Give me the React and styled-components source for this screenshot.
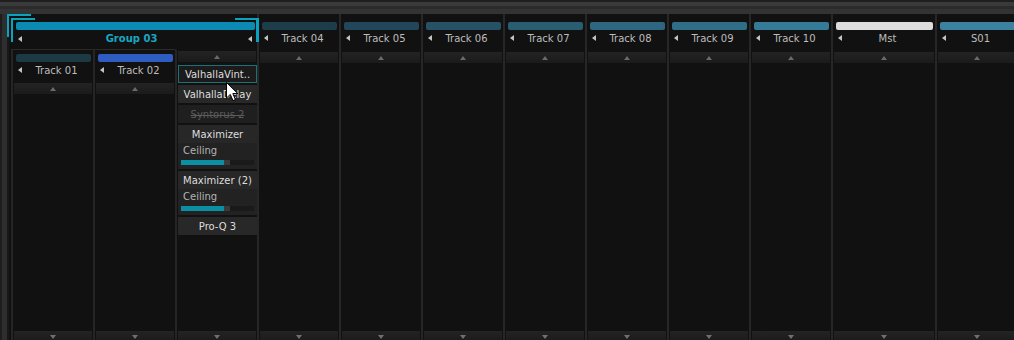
import React from 'react'
import styled, { createGlobalStyle } from 'styled-components'

const GlobalStyle = createGlobalStyle`
  html, body {
    margin: 0;
    padding: 0;
    background: #1a1a1a;
  }
  body {
    font-family: 'DejaVu Sans', 'Liberation Sans', sans-serif;
  }
`

const CYAN = '#0aa3bf'

const Mixer = styled.div`
  position: relative;
  width: 1014px;
  height: 340px;
  overflow: hidden;
  display: flex;
  flex-direction: column;
  background: #1a1a1a;
`

const TopBar = styled.div`
  flex: none;
  height: 14px;
  background: linear-gradient(#1e1e1e 0 2px, #3a3a3a 2px 6px, #2b2b2b 6px 9px, #333 9px 14px);
`

const Body = styled.div`
  flex: 1;
  display: flex;
  min-height: 0;
`

const Gutter = styled.div`
  flex: none;
  width: 9px;
  background: linear-gradient(90deg, #1d1d1d 0 2px, #2e2e2e 2px 7px, #181818 7px 9px);
`

const Column = styled.div`
  flex: none;
  width: ${p => p.$w || 80}px;
  display: flex;
  flex-direction: column;
  background: #111;
  border-right: 2px solid #272727;
`

const ColorBar = styled.div`
  flex: none;
  height: 8px;
  margin: ${p => p.$m || '8px 2px 0 3px'};
  border-radius: 2px;
  background: ${p => p.$color};
`

const Label = styled.div`
  flex: none;
  display: flex;
  align-items: center;
  height: ${p => p.$h || 16}px;
  font-size: 10px;
  font-weight: ${p => (p.$bold ? 700 : 400)};
  color: ${p => p.$color || '#bdbdbd'};
`

const ArrowLeft = styled.span`
  flex: none;
  width: 0;
  height: 0;
  margin-left: ${p => p.$ml || 5}px;
  border-top: 3px solid transparent;
  border-bottom: 3px solid transparent;
  border-right: 4px solid #c4c4c4;
`

const LabelText = styled.span`
  flex: 1;
  text-align: center;
  white-space: nowrap;
  padding-right: 2px;
`

const Strip = styled.div`
  flex: none;
  height: 11px;
  margin: ${p => (p.$down ? 'auto 1px -2px' : `${p.$top}px 1px 0`)};
  background: linear-gradient(#232323, #1b1b1b);
  display: flex;
  align-items: center;
  justify-content: center;
`

const Tri = styled.span`
  width: 0;
  height: 0;
  border-left: 3px solid transparent;
  border-right: 3px solid transparent;
  ${p => (p.$down ? 'border-top: 4px solid #707070;' : 'border-bottom: 4px solid #6a6a6a;')}
`

const GroupColumn = styled(Column)`
  position: relative;
  width: 248px;
`

const Corner = styled.span`
  position: absolute;
  box-sizing: border-box;
  top: ${p => p.$top}px;
  width: 24px;
  height: ${p => p.$h}px;
  border-top: 2px solid ${CYAN};
  ${p =>
    p.$right
      ? `right: ${p.$x}px; border-right: 3px solid ${CYAN};`
      : `left: ${p.$x}px; border-left: 2px solid ${CYAN};`}
`

const SubArea = styled.div`
  flex: 1;
  display: flex;
  margin-top: 2px;
  padding-left: 2px;
  min-height: 0;
`

const SubColumn = styled.div`
  flex: none;
  width: 80px;
  display: flex;
  flex-direction: column;
  border-left: 2px solid #252525;
  border-top: 1px solid ${p => (p.$fx ? 'transparent' : '#2a2a2a')};
`

const FxList = styled.div`
  display: flex;
  flex-direction: column;
  gap: 2px;
  margin: 3px 0 0 1px;
`

const Slot = styled.div`
  box-sizing: border-box;
  height: 18px;
  display: flex;
  align-items: center;
  justify-content: center;
  font-size: 10px;
  white-space: nowrap;
  overflow: hidden;
  color: ${p => (p.$off ? '#5c5c5c' : '#dedede')};
  text-decoration: ${p => (p.$off ? 'line-through' : 'none')};
  background: ${p => (p.$selected ? '#1b1b1b' : p.$off ? '#1f1f1f' : '#282828')};
  border: 1px solid ${p => (p.$selected ? '#1d6f78' : 'transparent')};
`

const Device = styled.div`
  box-sizing: border-box;
  height: 44px;
  display: flex;
  flex-direction: column;
  background: #222;
`

const DeviceTitle = styled.div`
  height: 18px;
  display: flex;
  align-items: center;
  justify-content: center;
  font-size: 10px;
  color: #dedede;
  background: #272727;
`

const ParamName = styled.div`
  height: 14px;
  display: flex;
  align-items: center;
  padding-left: 5px;
  font-size: 10px;
  color: #b4b4b4;
`

const Slider = styled.div`
  display: flex;
  height: 5px;
  margin: 3px 3px 0;
  background: #1a1a1a;
`

const SliderFill = styled.div`
  width: ${p => p.$v}%;
  background: #0b8fa2;
`

const SliderKnob = styled.div`
  width: 6px;
  background: #3a3a3a;
`

const Cursor = styled.svg`
  position: absolute;
  left: 226px;
  top: 82px;
`

const tracks = [
  { name: 'Track 04', color: '#1e3d4a' },
  { name: 'Track 05', color: '#22475a' },
  { name: 'Track 06', color: '#275266' },
  { name: 'Track 07', color: '#2a5c72' },
  { name: 'Track 08', color: '#2d667e' },
  { name: 'Track 09', color: '#306e88' },
  { name: 'Track 10', color: '#357a96' },
  { name: 'Mst', color: '#dcdcdc', w: 102 },
  { name: 'S01', color: '#3a82a0' },
]

const subTracks = [
  { name: 'Track 01', color: '#1d3a44' },
  { name: 'Track 02', color: '#2f5cc0' },
]

const TrackHead = ({ name, color, sub }) => (
  <>
    <ColorBar $color={color} $m={sub ? '4px 2px 0 3px' : undefined} />
    <Label>
      <ArrowLeft />
      <LabelText>{name}</LabelText>
    </Label>
    <Strip $top={sub ? 5 : 6}><Tri /></Strip>
  </>
)

const Maximizer = ({ title, value }) => (
  <Device>
    <DeviceTitle>{title}</DeviceTitle>
    <ParamName>Ceiling</ParamName>
    <Slider>
      <SliderFill $v={value} />
      <SliderKnob />
    </Slider>
  </Device>
)

export default function App() {
  return (
    <>
      <GlobalStyle />
      <Mixer>
        <TopBar />
        <Body>
          <Gutter />
          <GroupColumn>
            <Corner $x={-2} $top={0} $h={23} />
            <Corner $x={2} $top={4} $h={24} />
            <Corner $right $x={-2} $top={4} $h={24} />
            <ColorBar $color="#0b8bb3" $m="8px 2px 0 7px" />
            <Label $h={17} $bold $color="#17a8c3">
              <ArrowLeft $ml={9} />
              <LabelText>Group 03</LabelText>
              <ArrowLeft $ml={0} style={{ marginRight: 5 }} />
            </Label>
            <SubArea>
              {subTracks.map(t => (
                <SubColumn key={t.name}>
                  <TrackHead name={t.name} color={t.color} sub />
                  <Strip $down><Tri $down /></Strip>
                </SubColumn>
              ))}
              <SubColumn $fx>
                <Strip $top={1}><Tri /></Strip>
                <FxList>
                  <Slot $selected>ValhallaVint..</Slot>
                  <Slot>ValhallaDelay</Slot>
                  <Slot $off>Syntorus 2</Slot>
                  <Maximizer title="Maximizer" value={59} />
                  <Maximizer title="Maximizer (2)" value={59} />
                  <Slot>Pro-Q 3</Slot>
                </FxList>
                <Strip $down><Tri $down /></Strip>
              </SubColumn>
            </SubArea>
          </GroupColumn>
          {tracks.map(t => (
            <Column key={t.name} $w={t.w}>
              <TrackHead name={t.name} color={t.color} />
              <Strip $down><Tri $down /></Strip>
            </Column>
          ))}
        </Body>
        <Cursor width="13" height="20" viewBox="0 0 13 20">
          <path d="M0.5 0.5 L0.5 16 L4.3 12.4 L7 18.6 L9.4 17.6 L6.8 11.6 L11.8 11.6 Z" fill="#fff" stroke="#000" strokeWidth="1" />
        </Cursor>
      </Mixer>
    </>
  )
}
